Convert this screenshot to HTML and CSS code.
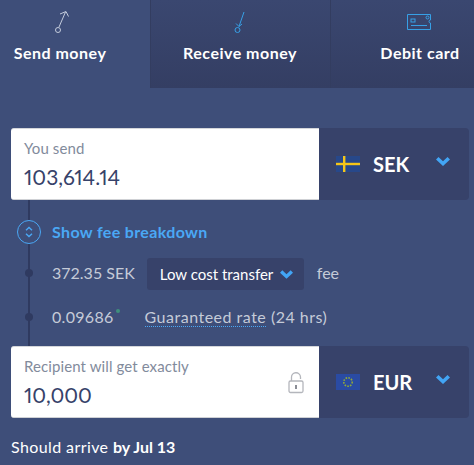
FILE: index.html
```html
<!DOCTYPE html>
<html lang="en">
<head>
<meta charset="utf-8">
<title>Send money</title>
<link rel="stylesheet" href="styles.css">
</head>
<body>
<main class="page">
  <nav class="tabs">
    <div class="tab tab-active">
      <svg class="tab-icon" width="24" height="24" viewBox="0 0 24 24" fill="none" stroke="#c3cbdc" stroke-width="1">
        <circle cx="10" cy="20" r="2.5"/><path d="M11 17 L17.5 2 M12 4 L18 1.5 L20.5 6.5"/>
      </svg>
      <span class="tab-label">Send money</span>
    </div>
    <div class="tab">
      <svg class="tab-icon" width="24" height="24" viewBox="0 0 24 24" fill="none" stroke="#37a0e6" stroke-width="1">
        <circle cx="9.5" cy="20" r="2.5"/><path d="M16 2 L11 16.5 M8 13.5 L11 16.5 L14 14"/>
      </svg>
      <span class="tab-label">Receive money</span>
    </div>
    <div class="tab">
      <svg class="tab-icon" width="24" height="24" viewBox="0 0 24 24" fill="none" stroke="#37a0e6" stroke-width="1">
        <path d="M-0.5 4.5 H22.5 V10 A1.5 1.5 0 0 0 22.5 13 V19.5 H-0.5 Z"/><rect x="3" y="9" width="4" height="3"/><circle cx="19.5" cy="7.5" r="1.5"/><path d="M3 15.5 H19"/>
      </svg>
      <span class="tab-label">Debit card</span>
    </div>
  </nav>

  <section class="calculator">
    <div class="amount-row">
      <div class="amount-field">
        <span class="amount-label">You send</span>
        <span class="amount-value">103,614.14</span>
      </div>
      <div class="currency">
        <svg class="flag" width="24" height="16" viewBox="0 0 24 16">
          <rect width="24" height="16" fill="#27488a"/><rect x="7" width="2.4" height="16" fill="#f5c518"/><rect y="6.8" width="24" height="2.4" fill="#f5c518"/>
        </svg>
        <span class="code">SEK</span>
        <svg class="chev" width="14" height="9" viewBox="0 0 14 9"><path d="M0 2.5 L2.5 0 L7 4.2 L11.5 0 L14 2.5 L7 9 Z" fill="#42a5f5"/></svg>
      </div>
    </div>

    <div class="details">
      <div class="detail detail-toggle">
        <span class="toggle-circle">
          <svg width="8" height="12" viewBox="0 0 8 12" fill="none" stroke="#4aa8f5" stroke-width="1.4"><path d="M1 4.2 L4 1.4 L7 4.2 M1 7.8 L4 10.6 L7 7.8"/></svg>
        </span>
        <span class="toggle-text">Show fee breakdown</span>
      </div>
      <div class="detail detail-fee">
        <span class="dot"></span>
        <span class="muted">372.35 SEK</span>
        <span class="chip">Low cost transfer
          <svg width="13" height="9" viewBox="0 0 14 9"><path d="M0 2.5 L2.5 0 L7 4.2 L11.5 0 L14 2.5 L7 9 Z" fill="#42a5f5"/></svg>
        </span>
        <span class="muted fee-word">fee</span>
      </div>
      <div class="detail detail-rate">
        <span class="dot"></span>
        <span class="muted rate">0.09686<i class="rate-mark"></i></span>
        <span class="muted rate-note"><span class="guaranteed">Guaranteed rate</span> (24 hrs)</span>
      </div>
    </div>

    <div class="amount-row">
      <div class="amount-field">
        <span class="amount-label">Recipient will get exactly</span>
        <span class="amount-value">10,000</span>
        <svg class="lock" width="16" height="22" viewBox="0 0 16 22" fill="none" stroke="#b4b6bc" stroke-width="1.3">
          <path d="M3.5 9 V5.5 A4.5 4.5 0 0 1 12.5 5 V7"/><rect x="1" y="9" width="14" height="11.5" rx="1.5"/><rect x="7" y="13" width="2" height="4" fill="#8a8d95" stroke="none"/>
        </svg>
      </div>
      <div class="currency">
        <svg class="flag" width="24" height="16" viewBox="0 0 24 16">
          <rect width="24" height="16" fill="#2a4ba3"/><circle cx="12" cy="8" r="4.2" fill="none" stroke="#8fa83a" stroke-width="1.6" stroke-dasharray="1.6 1.2"/>
        </svg>
        <span class="code">EUR</span>
        <svg class="chev" width="14" height="9" viewBox="0 0 14 9"><path d="M0 2.5 L2.5 0 L7 4.2 L11.5 0 L14 2.5 L7 9 Z" fill="#42a5f5"/></svg>
      </div>
    </div>

    <p class="arrival">Should arrive <b>by Jul 13</b></p>
  </section>
</main>
</body>
</html>
```

FILE: styles.css
```css
* { box-sizing: border-box; }

html, body {
  margin: 0;
  height: 100%;
}

body {
  background: #3e4e79;
  font-family: Lato, "Liberation Sans", sans-serif;
  color: #fff;
  overflow: hidden;
}

.page {
  width: 474px;
  height: 465px;
  overflow: hidden;
}

.tabs {
  display: grid;
  grid-template-columns: repeat(3, 180px);
  height: 88px;
  margin-left: -30px;
  width: 540px;
}

.tab {
  display: flex;
  flex-direction: column;
  align-items: center;
  padding-top: 10px;
  background: linear-gradient(#3a4770, #343e63);
  box-shadow: inset 1px 0 0 #333d60;
}

.tab-active {
  background: #3e4e79;
  box-shadow: none;
}

.tab-icon {
  display: block;
  flex: none;
  overflow: visible;
}

.tab-label {
  margin-top: 8px;
  font-size: 16px;
  font-weight: 700;
  line-height: 22px;
  letter-spacing: 0.5px;
}

.calculator {
  padding: 40px 5px 0 11px;
}

.amount-row {
  display: flex;
  height: 72px;
}

.amount-field {
  position: relative;
  flex: none;
  width: 308px;
  display: flex;
  flex-direction: column;
  padding: 10px 13px 0;
  background: #fff;
  border-top: 1px solid #d4d6da;
  border-bottom: 1px solid #cfd1d5;
  border-radius: 3px 0 0 3px;
}

.amount-label {
  font-size: 15px;
  line-height: 18px;
  color: #828b9c;
  letter-spacing: 0.1px;
}

.amount-value {
  margin-top: 6px;
  font-size: 21px;
  line-height: 28px;
  color: #37426a;
  font-feature-settings: "pnum";
}

.lock {
  position: absolute;
  right: 15px;
  top: 25px;
}

.currency {
  flex: 1;
  display: flex;
  align-items: center;
  padding-left: 17px;
  background: #37426a;
  border-radius: 0 4px 4px 0;
}

.flag {
  flex: none;
}

.code {
  margin-left: 13px;
  font-size: 20px;
  font-weight: 700;
}

.chev {
  margin-left: auto;
  margin-right: 19px;
  margin-bottom: 5px;
}

.details {
  height: 146px;
  margin-left: 7px;
  padding-top: 20px;
  position: relative;
  background: linear-gradient(#2f3a60, #2f3a60) 10px 0 / 2px 100% no-repeat;
}

.detail {
  display: flex;
  align-items: center;
  position: relative;
  padding-left: 34px;
}

.detail-toggle { height: 24px; }
.detail-fee { height: 32px; margin-top: 14px; }
.detail-rate { height: 32px; margin-top: 12px; }

.toggle-circle {
  position: absolute;
  left: -1px;
  top: 0;
  width: 24px;
  height: 24px;
  display: flex;
  align-items: center;
  justify-content: center;
  border: 1px solid #4aa8f5;
  border-radius: 50%;
  background: #3e4e79;
}

.toggle-text {
  margin-bottom: 2px;
  font-size: 16px;
  font-weight: 700;
  color: #4aa8f5;
  letter-spacing: 0.35px;
}

.dot {
  position: absolute;
  left: 7px;
  top: 11px;
  width: 8px;
  height: 8px;
  border-radius: 50%;
  background: #2f3a60;
}

.muted {
  margin-bottom: 3px;
  font-size: 16px;
  color: #c5cbd8;
}

.chip {
  display: flex;
  align-items: center;
  justify-content: space-between;
  flex: none;
  width: 157px;
  height: 32px;
  margin-left: 12px;
  padding: 0 11px 0 13px;
  background: #37426a;
  border-radius: 3px;
  font-size: 15px;
  color: #fff;
  white-space: nowrap;
}

.fee-word {
  margin-left: 13px;
}

.rate {
  position: relative;
  margin-right: 31px;
  letter-spacing: 0.3px;
}

.rate-mark {
  position: absolute;
  right: -6px;
  top: 2px;
  width: 4px;
  height: 4px;
  border-radius: 50%;
  background: #3f8f7d;
}

.rate-note {
  letter-spacing: 0.5px;
}

.guaranteed {
  border-bottom: 1px dotted #4aa8f5;
}

.arrival {
  margin: 19px 0 0;
  font-size: 16px;
  line-height: 20px;
  letter-spacing: 0.4px;
  color: #fff;
}

.arrival b {
  font-weight: 700;
  letter-spacing: 0;
}
```
